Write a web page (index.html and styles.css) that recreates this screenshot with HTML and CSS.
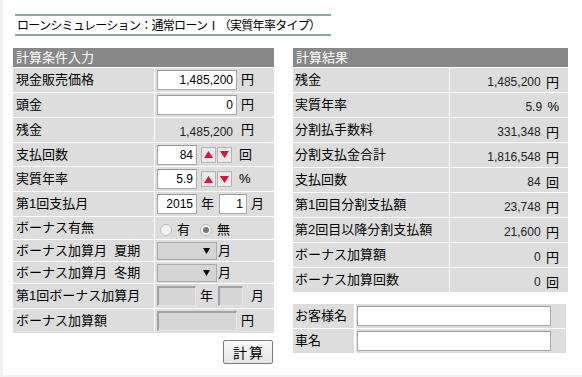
FILE: index.html
```html
<!DOCTYPE html>
<html lang="ja">
<head>
<meta charset="utf-8">
<title>ローンシミュレーション</title>
<link rel="stylesheet" href="styles.css">
</head>
<body>
<div class="page">
  <div class="title">ローンシミュレーション：通常ローンⅠ（実質年率タイプ）</div>
  <div class="panels">
    <section class="panel panel-left">
      <div class="head">計算条件入力</div>
      <div class="grid grid-l">
        <div class="lbl">現金販売価格</div>
        <div class="val"><input class="tb w80" value="1,485,200"><span class="u">円</span></div>

        <div class="lbl">頭金</div>
        <div class="val"><input class="tb w80" value="0"><span class="u">円</span></div>

        <div class="lbl">残金</div>
        <div class="val"><span class="plain">1,485,200</span><span class="u">円</span></div>

        <div class="lbl">支払回数</div>
        <div class="val"><input class="tb w40" value="84"><span class="spin first"><svg width="9" height="7" viewBox="0 0 9 7"><polygon points="4.5,0 9,7 0,7" fill="#e2103c"/></svg></span><span class="spin"><svg width="9" height="7" viewBox="0 0 9 7"><polygon points="0,0 9,0 4.5,7" fill="#e2103c"/></svg></span><span class="u u-spin">回</span></div>

        <div class="lbl">実質年率</div>
        <div class="val"><input class="tb w40" value="5.9"><span class="spin first"><svg width="9" height="7" viewBox="0 0 9 7"><polygon points="4.5,0 9,7 0,7" fill="#e2103c"/></svg></span><span class="spin"><svg width="9" height="7" viewBox="0 0 9 7"><polygon points="0,0 9,0 4.5,7" fill="#e2103c"/></svg></span><span class="u u-spin">%</span></div>

        <div class="lbl">第1回支払月</div>
        <div class="val"><input class="tb w40" value="2015"><span class="u">年</span><input class="tb w28 after" value="1"><span class="u">月</span></div>

        <div class="lbl">ボーナス有無</div>
        <div class="val radios"><span class="radio"></span><span class="rlabel">有</span><span class="radio checked"></span><span class="rlabel">無</span></div>

        <div class="lbl">ボーナス加算月&nbsp;&nbsp;夏期</div>
        <div class="val"><span class="sel"><svg width="7" height="6" viewBox="0 0 7 6"><polygon points="0,0 7,0 3.5,6" fill="#000"/></svg></span><span class="u u-sel">月</span></div>

        <div class="lbl">ボーナス加算月&nbsp;&nbsp;冬期</div>
        <div class="val"><span class="sel"><svg width="7" height="6" viewBox="0 0 7 6"><polygon points="0,0 7,0 3.5,6" fill="#000"/></svg></span><span class="u u-sel">月</span></div>

        <div class="lbl">第1回ボーナス加算月</div>
        <div class="val"><input class="tb dis w39" disabled><span class="u">年</span><input class="tb dis w25 after" disabled><span class="u u-m">月</span></div>

        <div class="lbl">ボーナス加算額</div>
        <div class="val"><input class="tb dis w80" disabled><span class="u">円</span></div>
      </div>
      <div class="actions"><button class="btn" type="button">計算</button></div>
    </section>

    <section class="panel panel-right">
      <div class="head">計算結果</div>
      <div class="grid grid-r">
        <div class="lbl">残金</div><div class="res">1,485,200 <span class="ru">円</span></div>
        <div class="lbl">実質年率</div><div class="res">5.9 <span class="ru">%</span></div>
        <div class="lbl">分割払手数料</div><div class="res">331,348 <span class="ru">円</span></div>
        <div class="lbl">分割支払金合計</div><div class="res">1,816,548 <span class="ru">円</span></div>
        <div class="lbl">支払回数</div><div class="res">84 <span class="ru">回</span></div>
        <div class="lbl">第1回目分割支払額</div><div class="res">23,748 <span class="ru">円</span></div>
        <div class="lbl">第2回目以降分割支払額</div><div class="res">21,600 <span class="ru">円</span></div>
        <div class="lbl">ボーナス加算額</div><div class="res">0 <span class="ru">円</span></div>
        <div class="lbl">ボーナス加算回数</div><div class="res">0 <span class="ru">回</span></div>
      </div>
      <div class="cust">
        <div class="lbl">お客様名</div><div class="val cval"><input class="tb ctb"></div>
        <div class="lbl">車名</div><div class="val cval"><input class="tb ctb"></div>
      </div>
    </section>
  </div>
</div>
</body>
</html>
```

FILE: styles.css
```css
* { box-sizing: border-box; }
html, body { margin: 0; padding: 0; background: #fff; }
body {
  font-family: "Liberation Sans", "Noto Sans CJK JP", sans-serif;
  font-size: 13px;
  color: #000;
}
.page {
  width: 582px;
  height: 377px;
  border-left: 3px solid #f1f1f1;
  border-bottom: 2px solid #f1f1f1;
  padding: 14px 0 0 10px;
  overflow: hidden;
}
.title {
  margin-left: 2px;
  width: 316px;
  height: 22px;
  border-top: 2px solid #8ba6a6;
  border-bottom: 2px solid #8ba6a6;
  padding-left: 2px;
  font-family: "Noto Sans CJK JP", sans-serif;
  font-size: 12px;
  line-height: 18px;
  letter-spacing: -0.7px;
  white-space: nowrap;
}
.panels {
  display: flex;
  gap: 19px;
  margin-top: 12px;
  align-items: flex-start;
}
.panel-left { width: 261px; }
.panel-right { width: 275px; }
.head {
  height: 19px;
  background: #888;
  color: #fff;
  font-size: 13px;
  line-height: 19px;
  padding-left: 3px;
  margin-bottom: 1px;
}
.grid { display: grid; gap: 1px; }
.grid-l {
  grid-template-columns: 141px 119px;
  grid-template-rows: 24px 24px 24px 23px 24px 24px 22px 21px 21px 24px 24px;
}
.grid-r {
  grid-template-columns: 156px 118px;
  grid-auto-rows: 24px;
}
.lbl {
  background: #ddd;
  display: flex;
  align-items: center;
  padding-left: 3px;
  line-height: 16px;
  white-space: nowrap;
}
.grid-r .lbl, .cust .lbl { padding-left: 2px; }
.val {
  background: #ddd;
  display: flex;
  align-items: center;
  padding-left: 2px;
  line-height: 16px;
}
.res {
  background: #ddd;
  display: flex;
  align-items: center;
  justify-content: flex-end;
  padding-right: 9px;
  padding-top: 3px;
  font-size: 12px;
  color: #222;
  white-space: pre;
}
.ru { font-size: 13px; margin-left: 2px; color: #000; }
.tb {
  height: 20px;
  margin: 0;
  border: 1px solid #a9a9a9;
  border-top-color: #999;
  background: #fff;
  font-family: "Liberation Sans", sans-serif;
  font-size: 12px;
  color: #000;
  text-align: right;
  padding: 0 3px;
  outline: none;
}
.w80 { width: 80px; }
.w40 { width: 40px; }
.w39 { width: 39px; }
.w28 { width: 28px; }
.w25 { width: 25px; }
.after { margin-left: 5px; }
.dis {
  background: #d6d6d6;
  border-width: 2px 1px 1px 2px;
  border-color: #a2a2a2 #e6e6e6 #e6e6e6 #a2a2a2;
}
.u { margin-left: 4px; }
.u-spin { margin-left: 7px; }
.u-sel { margin-left: 1px; }
.u-m { margin-left: 8px; }
.plain {
  width: 80px;
  text-align: right;
  padding-right: 4px;
  padding-top: 3px;
  font-size: 12px;
  color: #222;
}
.spin {
  width: 15px;
  height: 16px;
  margin-left: 1px;
  border: 1px solid #b4b4b4;
  background: #eaeaea;
  display: inline-flex;
  align-items: center;
  justify-content: center;
}
.spin.first { margin-left: 4px; }
.radios { padding-left: 5px; padding-top: 3px; }
.radio {
  width: 12px;
  height: 12px;
  border-radius: 50%;
  border: 1px solid #bdbdbd;
  background: #f2f2f2;
  display: inline-flex;
  align-items: center;
  justify-content: center;
}
.radio.checked::after {
  content: "";
  width: 6px;
  height: 6px;
  border-radius: 50%;
  background: #7a7a7a;
}
.rlabel { margin-left: 5px; margin-right: 10px; }
.sel {
  width: 60px;
  height: 18px;
  border: 1px solid #ababab;
  background: #d4d4d4;
  display: inline-flex;
  align-items: center;
  justify-content: flex-end;
  padding-right: 6px;
}
.actions {
  display: flex;
  justify-content: flex-end;
  margin-top: 7px;
  padding-right: 1px;
}
.btn {
  width: 50px;
  height: 24px;
  margin: 0;
  border: 1px solid #7c7c7c;
  border-radius: 2px;
  background: linear-gradient(#fbfbfb, #e4e4e4);
  font-family: "Noto Sans CJK JP", sans-serif;
  font-size: 14px;
  letter-spacing: 2px;
  padding: 0 0 0 2px;
  line-height: 20px;
  color: #000;
}
.cust {
  margin-top: 12px;
  width: 273px;
  display: grid;
  grid-template-columns: 61px 210px;
  grid-auto-rows: 24px;
  column-gap: 2px;
  row-gap: 1px;
}
.cval { padding-left: 1px; }
.ctb { width: 194px; text-align: left; }
```
